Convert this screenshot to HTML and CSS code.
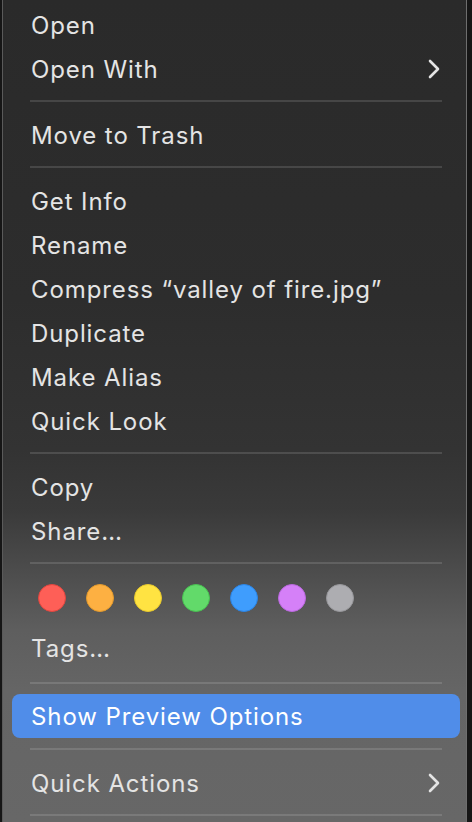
FILE: index.html
```html
<!DOCTYPE html>
<html>
<head>
<meta charset="utf-8">
<link rel="stylesheet" href="styles.css">
</head>
<body>
<div class="menu">
  <div class="item">Open</div>
  <div class="item">Open With<svg class="chev" viewBox="0 0 14 22" width="14" height="22"><path d="M3 3 L11 11 L3 19"/></svg></div>
  <div class="sep"></div>
  <div class="item">Move to Trash</div>
  <div class="sep"></div>
  <div class="item">Get Info</div>
  <div class="item">Rename</div>
  <div class="item">Compress “valley of fire.jpg”</div>
  <div class="item">Duplicate</div>
  <div class="item">Make Alias</div>
  <div class="item">Quick Look</div>
  <div class="sep"></div>
  <div class="item">Copy</div>
  <div class="item">Share…</div>
  <div class="sep"></div>
  <div class="tags">
    <span class="dot red"></span>
    <span class="dot orange"></span>
    <span class="dot yellow"></span>
    <span class="dot green"></span>
    <span class="dot blue"></span>
    <span class="dot purple"></span>
    <span class="dot gray"></span>
  </div>
  <div class="item">Tags…</div>
  <div class="sep sep-a"></div>
  <div class="item active">Show Preview Options</div>
  <div class="sep sep-b"></div>
  <div class="item">Quick Actions<svg class="chev" viewBox="0 0 14 22" width="14" height="22"><path d="M3 3 L11 11 L3 19"/></svg></div>
  <div class="sep"></div>
</div>
</body>
</html>
```
FILE: styles.css
```css
html, body {
  margin: 0;
  padding: 0;
  background: #161616;
  height: 822px;
  overflow: hidden;
}
.menu {
  box-sizing: border-box;
  margin-left: 2px;
  width: 465px;
  height: 822px;
  padding: 3px 6px 0 9px;
  border-left: 1px solid #5a5a5a;
  border-right: 1px solid #6e6e6e;
  background: linear-gradient(to bottom,
    #2a2a2a 0px,
    #2d2d2d 300px,
    #333333 450px,
    #3a3a3a 510px,
    #4c4c4c 570px,
    #5e5e5e 630px,
    #656565 690px,
    #676767 822px);
  font-family: Inter, "Noto Sans", sans-serif;
  font-size: 24px;
  letter-spacing: 0.9px;
  color: #e4e4e4;
}
.item {
  box-sizing: border-box;
  height: 44px;
  line-height: 42px;
  padding: 2px 21px 0 19px;
  display: flex;
  align-items: center;
  justify-content: space-between;
  border-radius: 8px;
  white-space: nowrap;
}
.item.active {
  background: #508de9;
  color: #ffffff;
}
.chev {
  fill: none;
  stroke: #e4e4e4;
  stroke-width: 2.6;
  stroke-linecap: round;
  stroke-linejoin: round;
  margin-right: -2px;
  margin-top: -2px;
}
.sep {
  height: 2px;
  margin: 9px 18px 11px 18px;
  background: rgba(255, 255, 255, 0.13);
}
.sep-a {
  margin-top: 12px;
  margin-bottom: 10px;
}
.sep-b {
  margin-top: 10px;
  margin-bottom: 11px;
}
.tags {
  display: flex;
  gap: 20px;
  height: 51px;
  box-sizing: border-box;
  padding: 9px 0 0 26px;
}
.dot {
  box-sizing: border-box;
  width: 28px;
  height: 28px;
  border-radius: 50%;
  border: 1.5px solid;
}
.red { background: #fe5f57; border-color: #e2463f; }
.orange { background: #fdb042; border-color: #e39a2c; }
.yellow { background: #ffe342; border-color: #e8c92c; }
.green { background: #62da6a; border-color: #48c051; }
.blue { background: #3f9dfd; border-color: #2a84e6; }
.purple { background: #d580f8; border-color: #bb68e0; }
.gray { background: #adadb1; border-color: #97979b; }
```
